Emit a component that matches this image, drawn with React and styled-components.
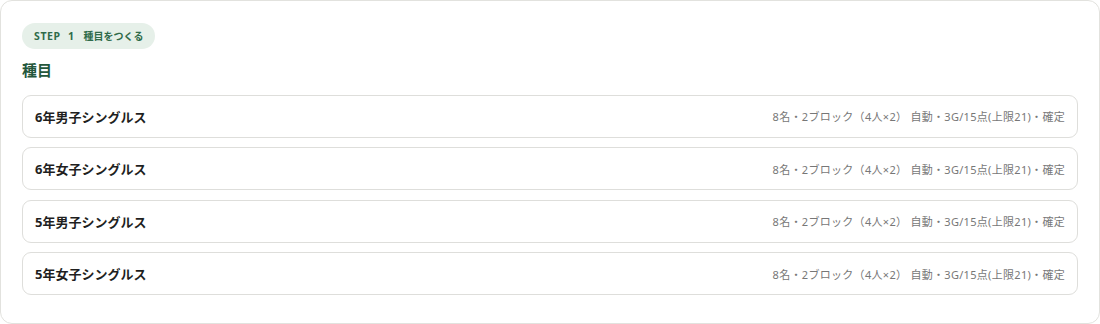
import React from 'react'
import styled, { createGlobalStyle } from 'styled-components';

const GlobalStyle = createGlobalStyle`
  html, body {
    margin: 0;
    padding: 0;
    background: #ffffff;
    font-family: "Noto Sans", "Noto Sans CJK JP", sans-serif;
  }
`;

const events = [
  { name: '6年男子シングルス', meta: '8名・2ブロック（4人×2） 自動・3G/15点(上限21)・確定' },
  { name: '6年女子シングルス', meta: '8名・2ブロック（4人×2） 自動・3G/15点(上限21)・確定' },
  { name: '5年男子シングルス', meta: '8名・2ブロック（4人×2） 自動・3G/15点(上限21)・確定' },
  { name: '5年女子シングルス', meta: '8名・2ブロック（4人×2） 自動・3G/15点(上限21)・確定' },
];

const App = () => {
  return (
    <>
      <GlobalStyle />
      <Panel>
        <Badge>
          <StepLabel>STEP 1</StepLabel>
          <BadgeText>種目をつくる</BadgeText>
        </Badge>
        <Heading>種目</Heading>
        <List>
          {events.map((ev, i) => (
            <Row key={i}>
              <Name>{ev.name}</Name>
              <Meta>{ev.meta}</Meta>
            </Row>
          ))}
        </List>
      </Panel>
    </>
  );
}

export default App;

const Panel = styled.div`
  box-sizing: border-box;
  width: 1100px;
  height: 324px;
  border: 1px solid #e2e2de;
  border-radius: 12px;
  padding: 22px 21px 28px 21px;
  background: #fff;
  display: flex;
  flex-direction: column;
  align-items: flex-start;
`;

const Badge = styled.div`
  display: inline-flex;
  align-items: center;
  gap: 9px;
  height: 26px;
  padding: 0 12px;
  border-radius: 13px;
  background: #e6f0e9;
  color: #2f6b4a;
  font-size: 10.5px;
  font-weight: 700;
`;

const StepLabel = styled.span`
  letter-spacing: 0.6px;
  word-spacing: 4px;
`;

const BadgeText = styled.span`
  font-size: 10px;
  font-weight: 600;
`;

const Heading = styled.h2`
  margin: 10px 0 0;
  font-size: 15px;
  font-weight: 700;
  color: #24573c;
  line-height: 22px;
`;

const List = styled.div`
  margin-top: 14px;
  width: 100%;
  display: flex;
  flex-direction: column;
  gap: 9.5px;
`;

const Row = styled.div`
  box-sizing: border-box;
  height: 43px;
  border: 1px solid #dededb;
  border-radius: 9px;
  padding: 0 12px;
  display: flex;
  align-items: center;
  justify-content: space-between;
`;

const Name = styled.div`
  font-size: 13px;
  font-weight: 700;
  color: #1f1f1f;
`;

const Meta = styled.div`
  font-size: 11px;
  letter-spacing: 0.3px;
  color: #777;
  white-space: pre;
`;
